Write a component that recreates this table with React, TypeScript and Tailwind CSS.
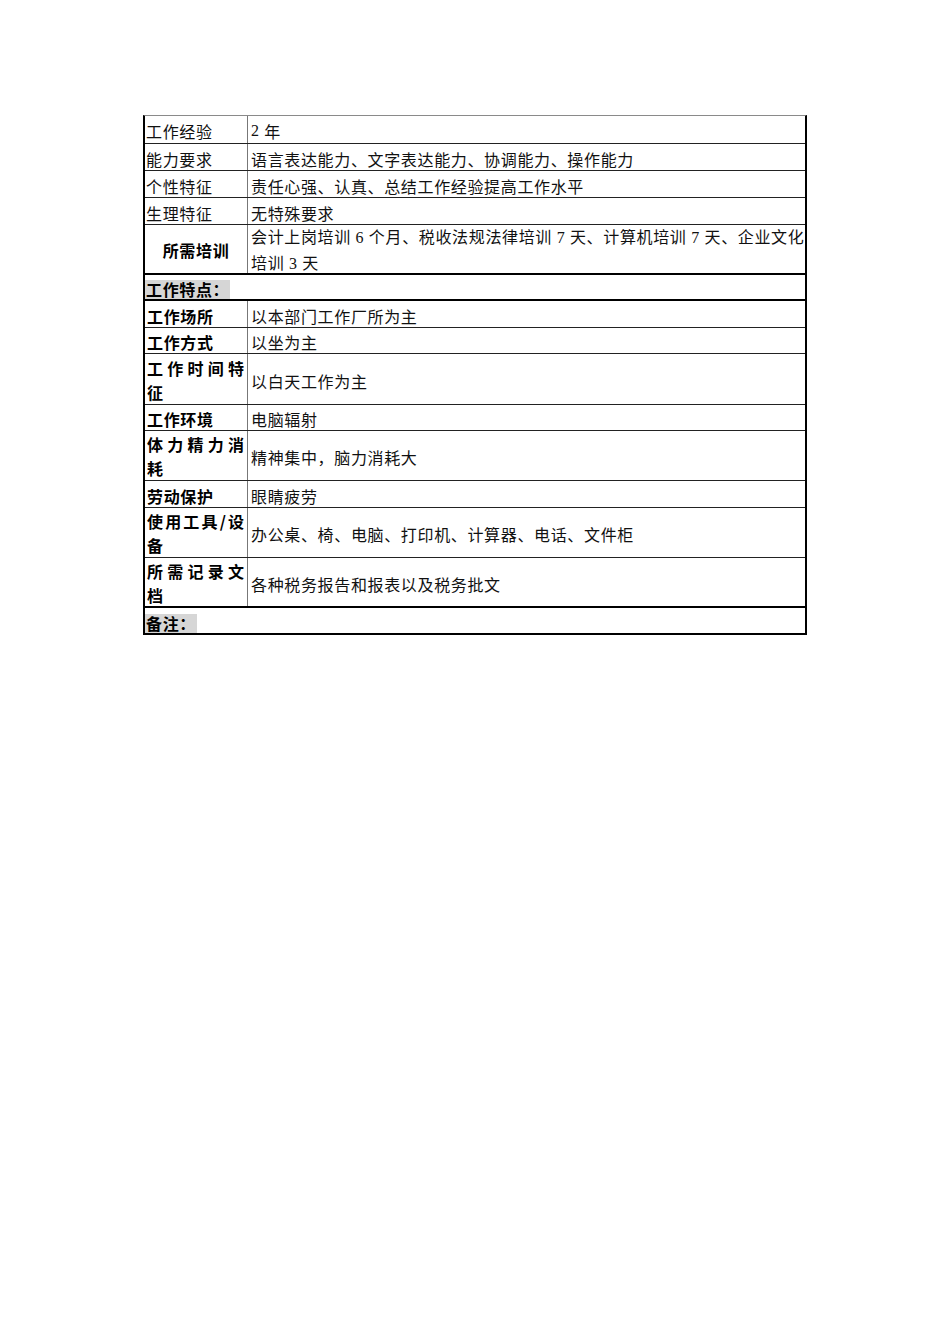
const body = "font-['Noto_Sans_CJK_SC',sans-serif]";

type Row = {
  label: string;
  value: string;
  h: string;
  thick?: boolean;
  split?: boolean;
};

const topRows: Row[] = [
  { label: '工作经验', value: '2 年', h: 'h-[28px]' },
  { label: '能力要求', value: '语言表达能力、文字表达能力、协调能力、操作能力', h: 'h-[27px]' },
  { label: '个性特征', value: '责任心强、认真、总结工作经验提高工作水平', h: 'h-[27px]' },
  { label: '生理特征', value: '无特殊要求', h: 'h-[27px]' },
];

const workRows: Row[] = [
  { label: '工作场所', value: '以本部门工作厂所为主', h: 'h-[27px]' },
  { label: '工作方式', value: '以坐为主', h: 'h-[26px]' },
  { label: '工作时间特征', value: '以白天工作为主', h: 'h-[51px]', split: true },
  { label: '工作环境', value: '电脑辐射', h: 'h-[26px]' },
  { label: '体力精力消耗', value: '精神集中，脑力消耗大', h: 'h-[50px]', split: true },
  { label: '劳动保护', value: '眼睛疲劳', h: 'h-[27px]' },
  { label: '使用工具/设备', value: '办公桌、椅、电脑、打印机、计算器、电话、文件柜', h: 'h-[50px]', split: true },
  { label: '所需记录文档', value: '各种税务报告和报表以及税务批文', h: 'h-[50px]', split: true, thick: true },
];

// digits use a serif face like the original document, CJK uses Noto
function Mixed({ text }: { text: string }) {
  const parts = text.split(/(\s?[0-9]+\s?)/);
  return (
    <>
      {parts.map((p, i) =>
        /[0-9]/.test(p) ? (
          <span key={i} className="whitespace-pre font-['Liberation_Serif',serif]">
            {p}
          </span>
        ) : (
          <span key={i}>{p}</span>
        ),
      )}
    </>
  );
}

function SplitLabel({ text }: { text: string }) {
  const chars = Array.from(text);
  const first = chars.slice(0, chars.length - 1);
  const last = chars[chars.length - 1];
  return (
    <div className="pl-[2px] pt-[1px] text-[16px] leading-[24px] font-bold tracking-normal text-black">
      <div className="flex w-[97px] justify-between">
        {first.map((c, i) => (
          <span key={i}>{c}</span>
        ))}
      </div>
      <div>{last}</div>
    </div>
  );
}

export default function App() {
  return (
    <div className="min-h-[1344px] bg-white pt-[115px]">
      <div className={`ml-[143px] w-[664px] border-t border-t-[#8a8a8a] border-x-2 border-x-black text-[16px] tracking-[0.65px] text-[#111] ${body}`}>
        {/* 基本要求 */}
        {topRows.map((r) => (
          <div key={r.label} className={`flex ${r.h} border-b border-b-[#222]`}>
            <div className="flex w-[103px] shrink-0 items-center border-r border-r-[#777] pl-[1px] pt-[3px]">
              {r.label}
            </div>
            <div className="flex flex-1 items-center whitespace-nowrap pl-[3px] pt-[3px]">
              <Mixed text={r.value} />
            </div>
          </div>
        ))}

        {/* 所需培训 */}
        <div className="flex h-[50px] border-b-2 border-b-black">
          <div className="flex w-[103px] shrink-0 items-center justify-center border-r border-r-[#777] pt-[2px] font-bold text-black">
            所需培训
          </div>
          <div className="flex flex-1 items-center overflow-hidden whitespace-nowrap pl-[3px] pt-[2px] leading-[24px]">
            <div>
              <Mixed text="会计上岗培训 6 个月、税收法规法律培训 7 天、计算机培训 7 天、企业文化" />
              <br />
              <Mixed text="培训 3 天" />
            </div>
          </div>
        </div>

        {/* 工作特点 */}
        <div className="flex h-[26px] items-end border-b-2 border-b-black">
          <span className="bg-[#d6d6d6] pl-[1px] pr-[1px] leading-[19px] font-bold text-black">
            工作特点：
          </span>
        </div>

        {workRows.map((r) => (
          <div
            key={r.label}
            className={`flex ${r.h} ${r.thick ? 'border-b-2 border-b-black' : 'border-b border-b-[#222]'}`}
          >
            <div className="flex w-[103px] shrink-0 items-center border-r border-r-[#777]">
              {r.split ? (
                <SplitLabel text={r.label} />
              ) : (
                <span className="pl-[2px] pt-[3px] font-bold text-black">{r.label}</span>
              )}
            </div>
            <div className="flex flex-1 items-center whitespace-nowrap pl-[3px] pt-[3px]">{r.value}</div>
          </div>
        ))}

        {/* 备注 */}
        <div className="flex h-[27px] items-end border-b-2 border-b-black">
          <span className="bg-[#d6d6d6] pl-[1px] pr-[1px] leading-[19px] font-bold text-black">
            备注：
          </span>
        </div>
      </div>
    </div>
  );
}
